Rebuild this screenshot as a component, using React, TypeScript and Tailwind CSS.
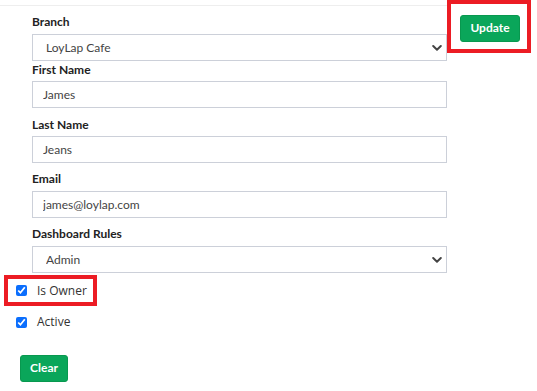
import React from "react";

function Chevron() {
  return (
    <svg
      width="10"
      height="7"
      viewBox="0 0 10 7"
      className="pointer-events-none absolute right-[5px] top-1/2 -translate-y-1/2"
    >
      <path d="M1.2 1.5 L5 5.2 L8.8 1.5" fill="none" stroke="#444" strokeWidth="2" strokeLinecap="round" strokeLinejoin="round" />
    </svg>
  );
}

function Label({ children, className = "" }: { children: React.ReactNode; className?: string }) {
  return (
    <div className={"h-[18px] text-[12px] leading-[18px] font-bold text-[#222] " + className}>
      {children}
    </div>
  );
}

function TextBox({ value }: { value: string }) {
  return (
    <input
      readOnly
      value={value}
      className="block w-full h-[27px] border border-[#ccd0d9] bg-white px-[10px] text-[12px] text-[#444] outline-none"
    />
  );
}

function SelectBox({ value }: { value: string }) {
  return (
    <div className="relative h-[27px]">
      <select
        defaultValue={value}
        className="block w-full h-[27px] appearance-none border border-[#ccd0d9] bg-white pl-[13px] text-[12px] text-[#444] outline-none"
      >
        <option>{value}</option>
      </select>
      <Chevron />
    </div>
  );
}

export default function App() {
  return (
    <div
      className="flex w-[537px] h-[391px] bg-white overflow-hidden"
      style={{ fontFamily: "Lato, 'Open Sans', sans-serif" }}
    >
      <div className="w-[447px] flex flex-col">
        <div className="mt-[5px] border-t border-[#eeeeee]" />
        <div className="pl-[32px] pt-[7px]">
          <Label>Branch</Label>
          <div className="mt-[3px]">
            <SelectBox value="LoyLap Cafe" />
          </div>
          <Label>First Name</Label>
          <div className="mt-[2px]">
            <TextBox value="James" />
          </div>
          <Label className="mt-[8px]">Last Name</Label>
          <div className="mt-[2px]">
            <TextBox value="Jeans" />
          </div>
          <Label className="mt-[7px]">Email</Label>
          <div className="mt-[3px]">
            <TextBox value="james@loylap.com" />
          </div>
          <Label className="mt-[7px]">Dashboard Rules</Label>
          <div className="mt-[3px]">
            <SelectBox value="Admin" />
          </div>
        </div>

        <div
          className="mt-[2px] ml-[4px] w-[93px] h-[31px] border-4 border-[#ec1c24] flex items-center pl-[8px] gap-[10px] text-[12px] text-[#333]"
          style={{ fontFamily: "'Open Sans', sans-serif" }}
        >
          <input type="checkbox" defaultChecked className="w-[11px] h-[11px] m-0 accent-[#0b6efd]" />
          <span>Is Owner</span>
        </div>

        <div
          className="mt-[9px] ml-[16px] h-[14px] flex items-center gap-[10px] text-[12px] text-[#333]"
          style={{ fontFamily: "'Open Sans', sans-serif" }}
        >
          <input type="checkbox" defaultChecked className="w-[11px] h-[11px] m-0 accent-[#0b6efd]" />
          <span>Active</span>
        </div>

        <div className="mt-[25px] ml-[20px]">
          <button className="w-[48px] h-[27px] rounded-[3px] bg-[#0aa65a] border border-[#08984f] text-white text-[12px] font-bold">
            Clear
          </button>
        </div>
      </div>

      <div className="w-[84px] h-[53px] border-4 border-[#ec1c24] pl-[9px] pt-[10px]">
        <button className="w-[60px] h-[27px] rounded-[3px] bg-[#0aa65a] border border-[#08984f] text-white text-[12px] font-bold">
          Update
        </button>
      </div>
    </div>
  );
}
